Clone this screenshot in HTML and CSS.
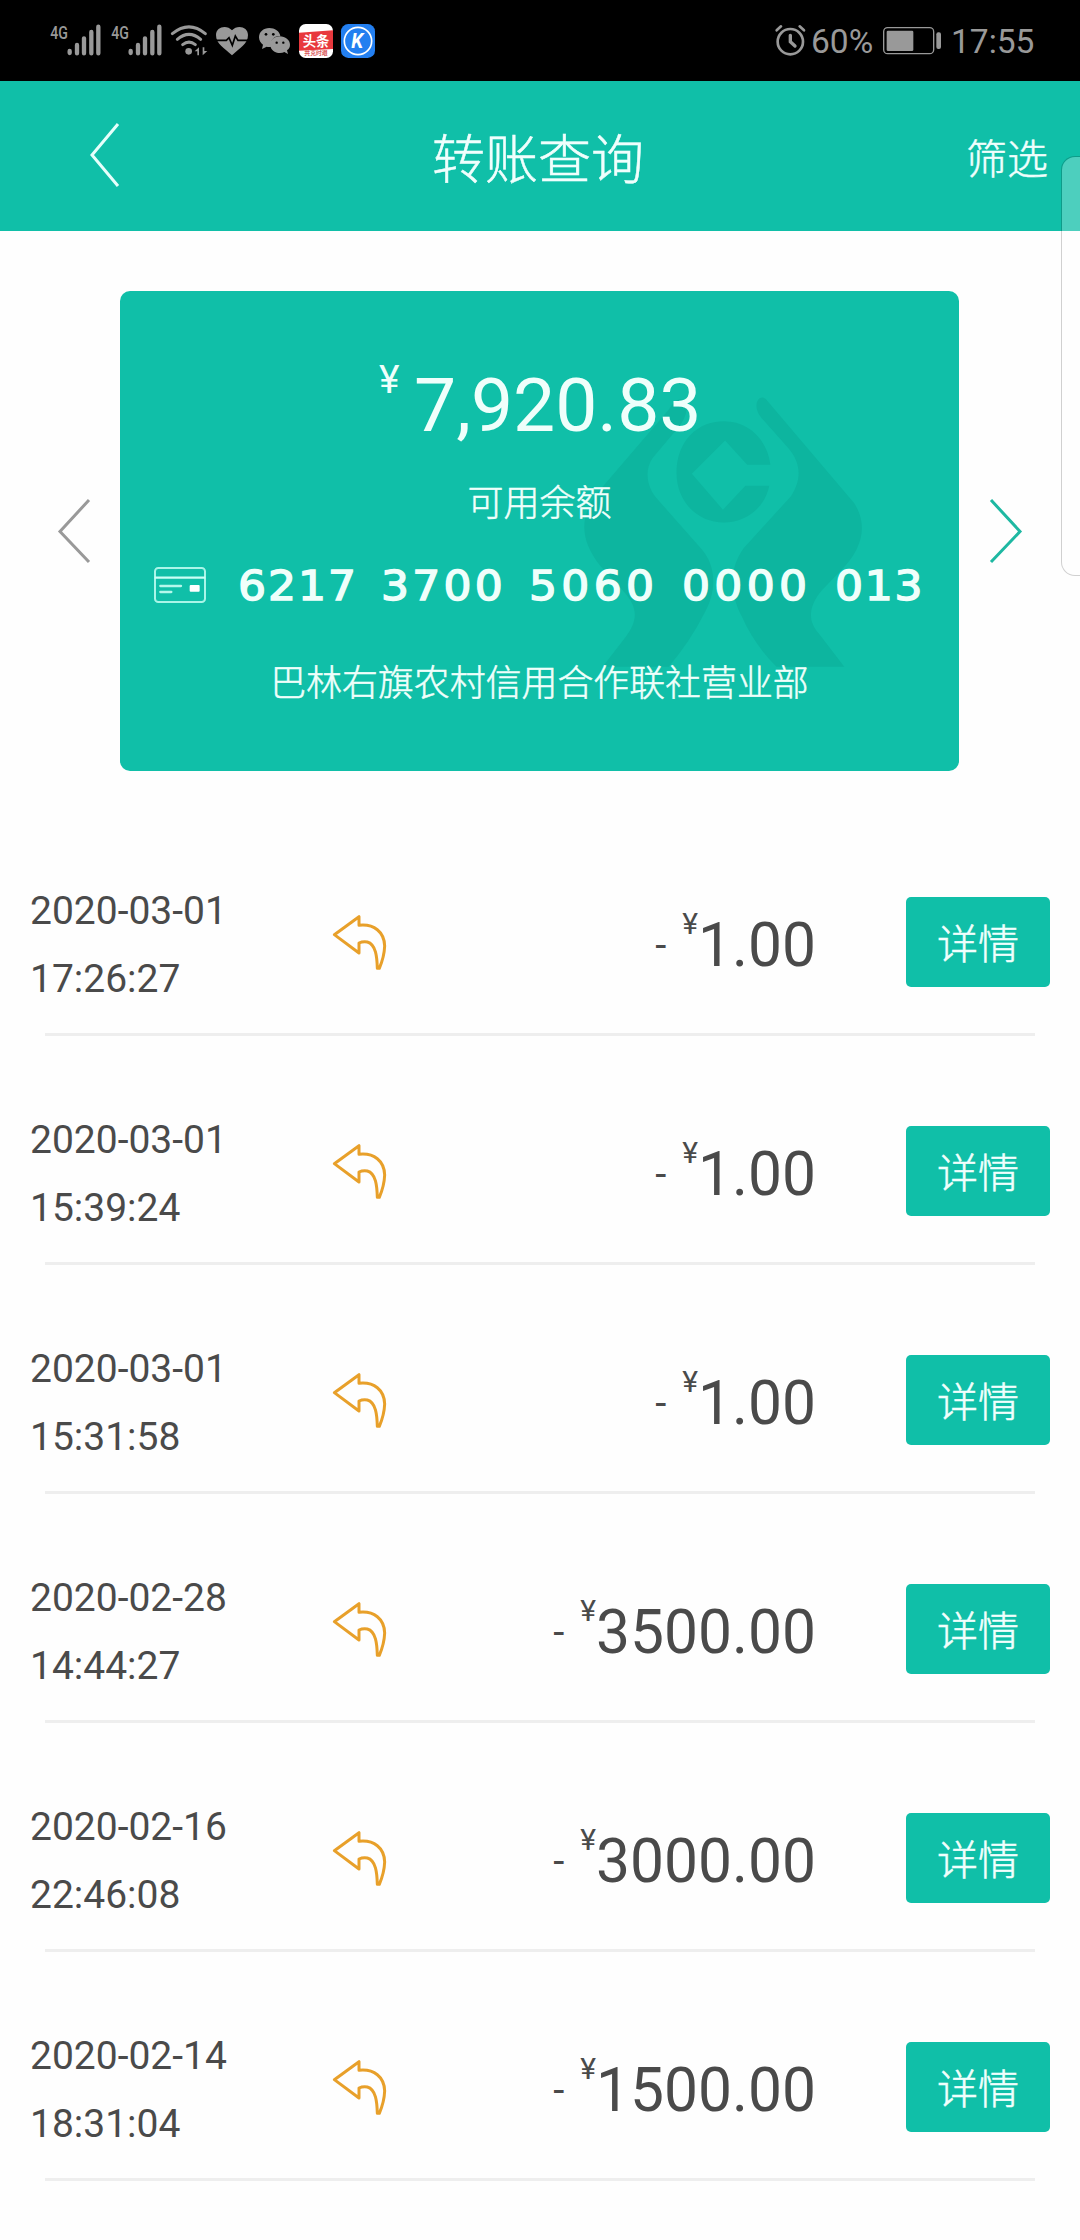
FILE: index.html
```html
<!DOCTYPE html>
<html lang="zh-CN">
<head>
<meta charset="utf-8">
<title>转账查询</title>
<link rel="stylesheet" href="styles.css">
</head>
<body>
<svg class="defs" width="0" height="0">
  <symbol id="signal" viewBox="60 0 180 243">
    <text class="net" x="61" y="116" font-size="56" textLength="53" lengthAdjust="spacingAndGlyphs" font-weight="500">4G</text>
    <path d="M119 153v6M141 135v25M162 115v45M184 96v64M205 80v80" stroke="currentColor" stroke-width="13" stroke-linecap="round"/>
  </symbol>
  <symbol id="reply" viewBox="0 0 240 240">
    <path d="M43 104L117 50V76C162 71 193 96 194 138C193 165 186 186 178 205H172C171 172 168 133 142 126Q128 124 117 129V159Z" fill="none" stroke="#e8a02a" stroke-width="9" stroke-linejoin="round"/>
  </symbol>
</svg>

<header class="status">
  <div class="status-left">
    <svg class="sig"><use href="#signal"/></svg>
    <svg class="sig second"><use href="#signal"/></svg>
    <svg class="wifi" viewBox="423 0 135 243">
      <g fill="none" stroke="currentColor" stroke-width="9" stroke-linecap="round"><path d="M427 101Q477 60 526 101M442 118Q477 88 512 118M458 134Q477 119 496 134"/></g>
      <circle cx="476" cy="154" r="10" fill="currentColor"/><path d="M494 154L507 142V166H502V154ZM518 142V166L532 153H523V142Z" fill="currentColor"/>
    </svg>
    <svg class="heart" viewBox="558 0 128 243">
      <path d="M606 91C591 73 558 79 558 105C558 132 583 144 606 166C629 144 654 132 654 105C654 79 621 73 606 91Z" fill="currentColor"/>
      <path d="M558 121H589L597 113L607 136L616 108L624 121H654" fill="none" stroke="#000" stroke-width="5"/>
    </svg>
    <svg class="wechat" viewBox="686 0 121 243">
      <path d="M717 84C699 84 686 96 686 112C686 122 691 129 698 134L695 147L709 140Q716 142 723 140C718 122 731 107 750 108C748 93 733 84 717 84Z" fill="currentColor"/>
      <path d="M748 109C731 109 720 120 720 134C720 149 733 159 749 159Q757 159 762 156L773 162L770 151C776 147 779 141 779 134C779 120 765 109 748 109Z" fill="currentColor"/>
      <g fill="#000"><circle cx="707" cy="103" r="4"/><circle cx="729" cy="103" r="4"/><circle cx="739" cy="128" r="3.5"/><circle cx="759" cy="128" r="3.5"/></g>
    </svg>
    <svg class="app" viewBox="807 0 102 243">
      <rect x="807" y="72" width="102" height="102" rx="20" fill="#fff"/><path d="M807 98L909 91V147L807 152Z" fill="#e8383d"/>
      <text class="cjk" x="818" y="139" font-size="42" textLength="80" lengthAdjust="spacingAndGlyphs" font-weight="700">头条</text>
      <text class="cjk slogan" x="823" y="166" font-size="17" font-weight="700" textLength="70" lengthAdjust="spacingAndGlyphs">共克时艰</text>
    </svg>
    <svg class="app k" viewBox="933 0 102 243">
      <rect x="933" y="72" width="102" height="102" rx="22" fill="#237ff0"/><circle cx="984" cy="123" r="41" fill="none" stroke="#fff" stroke-width="5"/>
      <text x="964" y="144" font-size="58" font-weight="700" font-style="italic">K</text>
    </svg>
  </div>
  <div class="status-right">
    <svg class="alarm" viewBox="74 0 92 243"><g fill="none" stroke="currentColor" stroke-width="8" stroke-linecap="round"><circle cx="120" cy="125" r="38"/><path d="M120 106V125L134 138" stroke-width="10"/><path d="M79 91L92 79M148 79L161 91"/></g></svg>
    <span class="pct">60%</span>
    <svg class="battery" viewBox="399 0 174 243"><rect x="401" y="83" width="150" height="78" rx="12" fill="none" stroke="currentColor" stroke-width="4"/><rect x="410" y="92" width="80" height="61" rx="4" fill="currentColor"/><rect x="559" y="97" width="14" height="50" rx="6" fill="currentColor"/></svg>
    <span class="clock">17:55</span>
  </div>
</header>

<nav class="bar">
  <svg class="back" viewBox="0 0 30 62"><path d="M28 0L2 31L28 62" fill="none" stroke="#e6fffb" stroke-width="3"/></svg>
  <h1>转账查询</h1>
  <span class="filter">筛选</span>
</nav>

<main>
  <section class="account">
    <svg class="chev" viewBox="0 0 32 64"><path d="M31 1L2 32.500L31 63" fill="none" stroke="#999" stroke-width="3"/></svg>
    <div class="card">
      <svg class="mark" viewBox="680 190 790 830" preserveAspectRatio="none">
        <g fill="#0db59f">
          <path d="M965 215Q980 245 950 290L875 385C850 425 860 475 890 510L1010 655C1060 715 1050 795 1020 850Q980 935 920 1010H735L800 920C835 870 835 830 790 780L730 710C670 630 670 560 720 490L920 240Q945 195 965 215Z"/>
          <path d="M1192 208C1175 190 1150 225 1180 265L1255 355C1295 405 1290 455 1262 500L1130 655C1080 730 1100 810 1125 860Q1160 945 1222 1010H1412L1340 910C1310 875 1310 830 1350 780L1400 725C1470 650 1475 580 1440 520Z"/>
          <path d="M1205 405C1195 325 1140 275 1075 275C1000 275 942 335 942 430C942 515 1000 578 1075 578C1140 578 1190 530 1202 468H1135L1072 540L985 432L1078 332L1140 405Z"/>
        </g>
      </svg>
      <p class="balance"><sup>¥</sup><b>7,920.83</b></p>
      <p class="label">可用余额</p>
      <div class="number">
        <svg class="cardicon" viewBox="132 81 156 108"><rect x="135" y="84" width="150" height="102" rx="10" fill="none" stroke="#a9f5e8" stroke-width="6"/><path d="M134 113H286" stroke="#c9fff6" stroke-width="7"/><path d="M151 138H213M151 156H184" stroke="#b5f8ec" stroke-width="7" stroke-linecap="round"/><rect x="239" y="135" width="30" height="20" rx="3" fill="#fff"/></svg>
        <p class="digits"><span class="g1">6217</span> <span class="g2">3700</span> <span>5060</span> <span>0000</span> <span class="g5">013</span></p>
      </div>
      <p class="branch">巴林右旗农村信用合作联社营业部</p>
    </div>
    <svg class="chev" viewBox="0 0 32 64"><path d="M1 1L30 32.500L1 63" fill="none" stroke="#1eb8a2" stroke-width="3"/></svg>
  </section>

  <ul class="list">
    <li><time>2020-03-01<br>17:26:27</time><svg class="reply"><use href="#reply"/></svg><p class="amount"><i>-</i><sup>¥</sup><b>1.00</b></p><button>详情</button></li>
    <li><time>2020-03-01<br>15:39:24</time><svg class="reply"><use href="#reply"/></svg><p class="amount"><i>-</i><sup>¥</sup><b>1.00</b></p><button>详情</button></li>
    <li><time>2020-03-01<br>15:31:58</time><svg class="reply"><use href="#reply"/></svg><p class="amount"><i>-</i><sup>¥</sup><b>1.00</b></p><button>详情</button></li>
    <li><time>2020-02-28<br>14:44:27</time><svg class="reply"><use href="#reply"/></svg><p class="amount"><i>-</i><sup>¥</sup><b>3500.00</b></p><button>详情</button></li>
    <li><time>2020-02-16<br>22:46:08</time><svg class="reply"><use href="#reply"/></svg><p class="amount"><i>-</i><sup>¥</sup><b>3000.00</b></p><button>详情</button></li>
    <li><time>2020-02-14<br>18:31:04</time><svg class="reply"><use href="#reply"/></svg><p class="amount"><i>-</i><sup>¥</sup><b>1500.00</b></p><button>详情</button></li>
  </ul>
</main>
<aside class="edge-panel"></aside>
</body>
</html>
```
FILE: styles.css
```css
* { box-sizing: border-box; margin: 0; padding: 0; }
body {
  position: relative;
  width: 1080px;
  height: 2240px;
  overflow: hidden;
  background: #fefefe;
  color: #4a4a4a;
  font-family: Roboto, "Noto Sans CJK SC", sans-serif;
}
svg { display: block; flex: none; overflow: visible; }
.defs { position: absolute; }
b, i { font-weight: 400; font-style: normal; }

.status { display: flex; justify-content: space-between; height: 81px; background: #000; color: #999; }
.status svg { height: 81px; }
.net { fill: #999; }
.app text { fill: #fff; }
.app .slogan { fill: #d9575a; }
.cjk { font-family: "Noto Sans CJK SC", sans-serif; }
.status-left { display: flex; padding-left: 50px; }
.sig { width: 60px; }
.second { margin-left: 1px; }
.wifi { width: 45px; }
.heart { width: 42.67px; }
.wechat { width: 40.33px; }
.app { width: 34px; }
.k { margin-left: 8px; }
.status-right { display: flex; padding-right: 45px; font-size: 33.5px; line-height: 83px; }
.alarm { width: 30.67px; }
.pct { width: 77px; padding-left: 5px; }
.battery { width: 58px; }
.clock { width: 94px; padding-left: 10px; white-space: nowrap; }

.bar { display: flex; align-items: center; justify-content: space-between; height: 150px; padding: 0 31px 0 90px; background: #10bfa8; color: #f0fffd; font-family: "Noto Sans CJK SC", sans-serif; }
.back { width: 30px; height: 62px; margin-top: -2px; }
.bar h1 { flex: 1; padding-right: 10px; text-align: center; font-size: 53px; line-height: 70px; font-weight: 300; }
.filter { padding-right: 1px; font-size: 41px; line-height: 58px; font-weight: 300; }
.bar h1, .filter, .label, .branch, button { -webkit-text-stroke: .5px currentColor; }

.account { display: flex; align-items: center; height: 480px; margin-top: 60px; padding: 0 58px; justify-content: space-between; }
.chev { width: 32px; height: 64px; }
.card { position: relative; width: 839px; height: 480px; margin-right: 1px; border-radius: 10px; background: #10bfa8; color: #effffb; }
.card > p, .number { position: relative; }
.mark { position: absolute; left: 463px; top: 102px; width: 282px; height: 277px; }
.balance { display: flex; padding: 64px 0 0 258px; height: 174px; }
.balance sup { width: 36px; padding-left: 1px; font-size: 39px; line-height: 50px; }
.balance b { padding-top: 6px; font-size: 75px; line-height: 88px; white-space: nowrap; }
.label { height: 76px; text-align: center; font: 300 36px/70px "Noto Sans CJK SC", sans-serif; }
.number { display: flex; align-items: center; height: 87px; padding-left: 34px; }
.cardicon { width: 52px; height: 36px; }
.digits { display: flex; gap: 21.3px; margin-left: 32px; font: 40px/60px "DejaVu Sans", sans-serif; letter-spacing: 4px; -webkit-text-stroke: 1.4px currentColor; white-space: nowrap; transform: translateY(1px) scaleX(1.1); transform-origin: 0 50%; }
.g1 { width: 108.7px; letter-spacing: 1.8px; }
.g2 { width: 113.2px; letter-spacing: 3px; }
.g5 { letter-spacing: 1.6px; }
.branch { text-align: center; font: 300 35.9px/104px "Noto Sans CJK SC", sans-serif; }

.list { margin-top: 36px; list-style: none; }
.list li { position: relative; display: flex; height: 229px; padding: 90px 30px 0; }
.list li::after { content: ""; position: absolute; left: 45px; right: 45px; bottom: 0; height: 3px; background: #eee; }
time { width: 290px; margin-top: -20px; font-size: 39px; line-height: 68px; }
.reply { width: 80px; height: 80px; margin-top: 3px; }
.amount { display: flex; justify-content: flex-end; width: 416px; height: 90px; white-space: nowrap; }
.amount i { padding-top: 25px; font-size: 40px; line-height: 47px; }
.amount sup { margin-left: 16px; font-size: 30px; line-height: 54px; }
.amount b { padding-top: 14px; font-size: 60.500px; line-height: 70px; }
button { width: 144px; height: 90px; margin-left: auto; padding-bottom: 2px; border: 0; border-radius: 5px; background: #10bfa8; color: #f0fffd; font: 300 41px/88px "Noto Sans CJK SC", sans-serif; }

.edge-panel { position: absolute; left: 1061px; top: 156px; width: 40px; height: 420px; border: 1px solid rgba(0, 0, 0, .18); border-radius: 14px; background: rgba(255, 255, 255, .26); background-clip: padding-box; }
```
